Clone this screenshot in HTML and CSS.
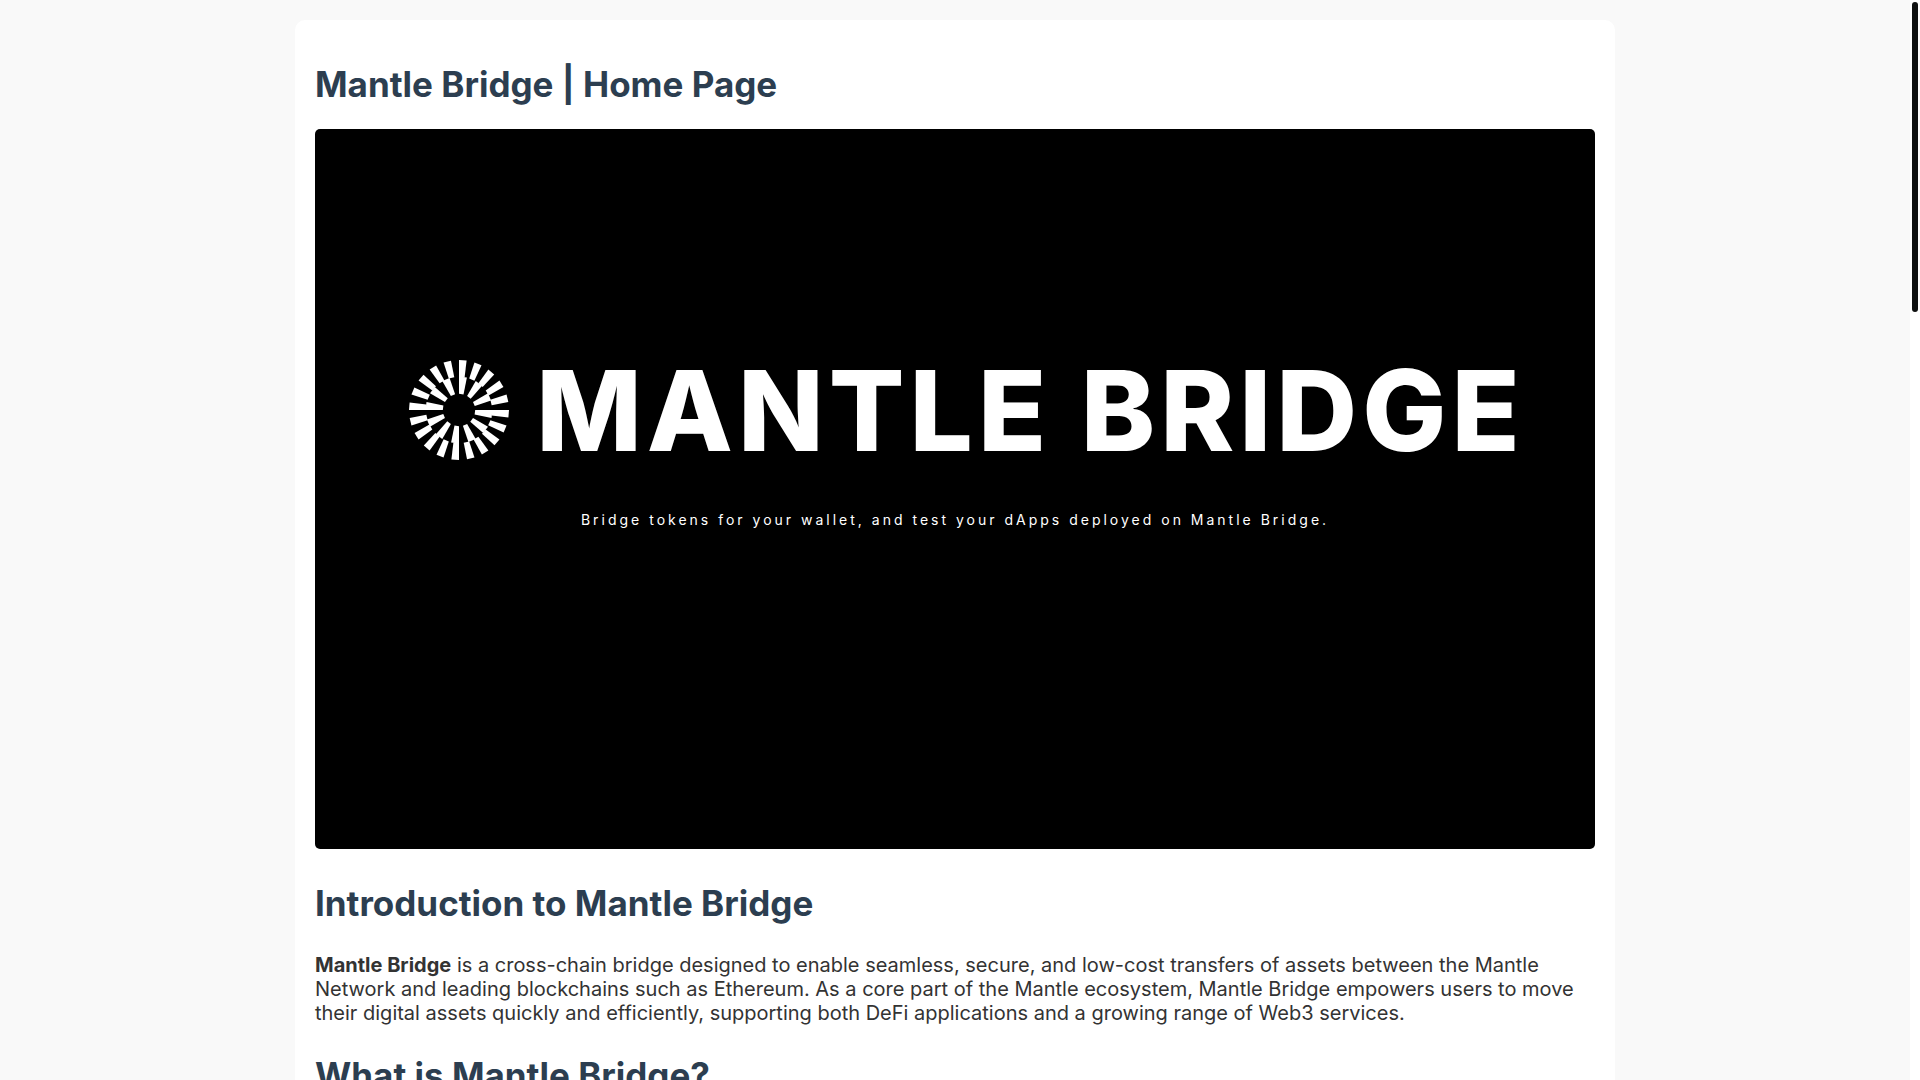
FILE: index.html
```html
<!DOCTYPE html>
<html lang="en">
<head>
<meta charset="utf-8">
<title>Mantle Bridge | Home Page</title>
<link rel="stylesheet" href="styles.css">
</head>
<body>
<div class="viewport">
  <main class="card">
    <h1 class="title">Mantle Bridge | Home Page</h1>
    <section class="banner">
      <div class="brand">
        <svg class="brand-mark" viewBox="-50 -50 100 100" fill="#fff" aria-hidden="true">
          <defs>
            <path id="outer" d="M0-50 7.6-49.4 5.6-32.5 0-33Z"/>
            <path id="inner" d="M0-33.5 7.9-32.5 4.5-15.6 0-16.2Z"/>
            <g id="quarter">
              <use href="#outer"/>
              <use href="#outer" transform="rotate(18)"/>
              <use href="#outer" transform="rotate(36)"/>
              <use href="#outer" transform="rotate(54)"/>
              <use href="#outer" transform="rotate(72)"/>
              <use href="#inner"/>
              <use href="#inner" transform="rotate(30)"/>
              <use href="#inner" transform="rotate(60)"/>
            </g>
          </defs>
          <use href="#quarter"/>
          <use href="#quarter" transform="rotate(90)"/>
          <use href="#quarter" transform="rotate(180)"/>
          <use href="#quarter" transform="rotate(270)"/>
        </svg>
        <span class="brand-name">MANTLE BRIDGE</span>
      </div>
      <p class="tagline">Bridge tokens for your wallet, and test your dApps deployed on Mantle Bridge.</p>
    </section>
    <h2 class="heading">Introduction to Mantle Bridge</h2>
    <p class="text"><strong>Mantle Bridge</strong> is a cross-chain bridge designed to enable seamless, secure, and low-cost transfers of assets between the Mantle Network and leading blockchains such as Ethereum. As a core part of the Mantle ecosystem, Mantle Bridge empowers users to move their digital assets quickly and efficiently, supporting both DeFi applications and a growing range of Web3 services.</p>
    <h2 class="heading">What is Mantle Bridge?</h2>
  </main>
</div>
<div class="scrollbar"><div class="scrollbar-thumb"></div></div>
</body>
</html>
```
FILE: styles.css
```css
* { box-sizing: border-box; }

body {
  margin: 0;
  height: 100vh;
  display: grid;
  grid-template-columns: minmax(0, 1fr) 10px;
  overflow: hidden;
  background: #fff;
  color: #333;
  font-family: Inter, "Liberation Sans", sans-serif;
}

.viewport {
  height: 100vh;
  overflow: hidden;
  padding: 20px;
  background: #f9f9f9;
}

.card {
  max-width: 1320px;
  margin: 0 auto;
  padding: 20px;
  background: #fff;
  border-radius: 10px;
}

.title,
.heading {
  color: #2c3e50;
  font-size: 35px;
  line-height: 42px;
  font-weight: 700;
}

.title { margin: 23px 0 24px; }

.heading { margin: 29px 0; }

.banner {
  display: flex;
  flex-direction: column;
  align-items: center;
  gap: 44px;
  aspect-ratio: 16 / 9;
  margin-bottom: 33px;
  padding-top: 225px;
  border-radius: 5px;
  background: #000;
  color: #fff;
}

.brand {
  display: flex;
  align-items: center;
  gap: 27px;
  padding-left: 24px;
}

.brand-mark {
  width: 100px;
  height: 100px;
}

.brand-name {
  font-size: 112px;
  line-height: 112px;
  font-weight: 800;
  letter-spacing: 5px;
  white-space: nowrap;
}

.tagline {
  margin: 0;
  font-size: 14px;
  line-height: 20px;
  letter-spacing: 3px;
}

.text {
  margin: 24px 0;
  font-size: 20px;
  line-height: 24px;
}

.scrollbar { padding: 2px; }

.scrollbar-thumb {
  height: 310px;
  border-radius: 3px;
  background: #0f1111;
}
```
